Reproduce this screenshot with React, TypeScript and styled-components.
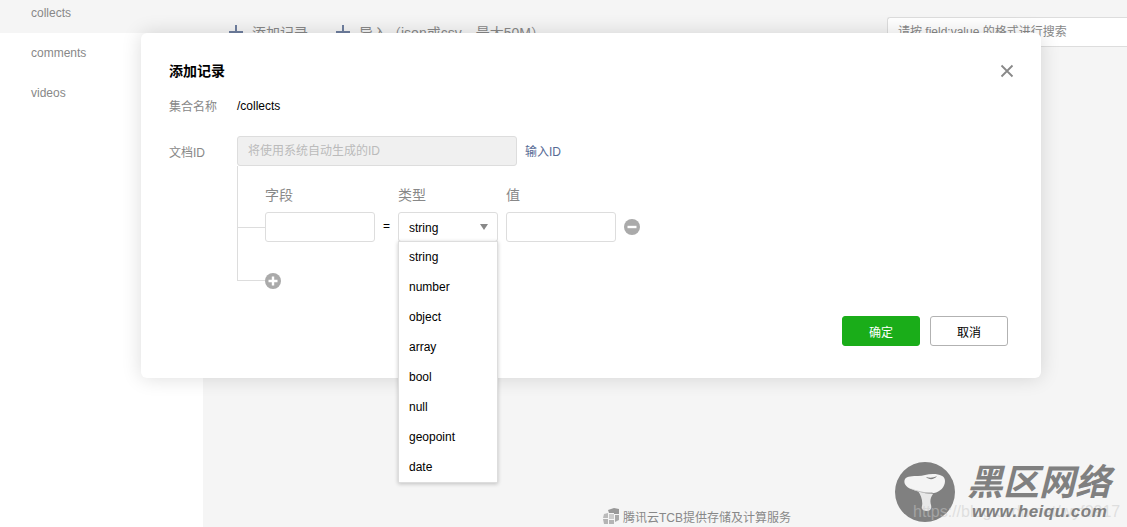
import React from 'react';
import styled, { createGlobalStyle } from 'styled-components';

const GlobalStyle = createGlobalStyle`
  html, body {
    margin: 0;
    padding: 0;
    background: #f5f5f5;
  }
  * {
    box-sizing: border-box;
  }
  body {
    font-family: "Liberation Sans", "Noto Sans CJK SC", sans-serif;
    font-size: 12px;
    color: #000;
  }
`;

const Page = styled.div`
  position: relative;
  display: flex;
  width: 1127px;
  height: 527px;
  overflow: hidden;
`;

const Sidebar = styled.ul`
  width: 203px;
  height: 100%;
  margin: 0;
  padding: 0;
  list-style: none;
  background: #fff;
`;

const SideItem = styled.li<{ $active?: boolean }>`
  height: 40px;
  margin-top: ${p => (p.$active ? '-7px' : '0')};
  padding-left: 31px;
  line-height: 40px;
  color: #888;
  background: ${p => (p.$active ? '#f5f5f5' : 'transparent')};
`;

const Main = styled.main`
  flex: 1;
  display: flex;
  flex-direction: column;
  background: #f5f5f5;
`;

const Toolbar = styled.div`
  display: flex;
  align-items: flex-start;
  height: 47px;
  padding: 17px 0 0 26px;
`;

const ToolAction = styled.div<{ $width: number }>`
  display: flex;
  align-items: center;
  gap: 9px;
  width: ${p => p.$width}px;
  height: 30px;
  font-size: 14px;
  color: #888;
`;

const SearchBox = styled.div`
  width: 240px;
  height: 30px;
  margin-left: auto;
  padding-left: 10px;
  line-height: 28px;
  color: #888;
  background: #fff;
  border: 1px solid #ddd;
  border-right: 0;
  border-radius: 3px 0 0 3px;
`;

const Footer = styled.div`
  display: flex;
  align-items: center;
  gap: 4px;
  height: 20px;
  margin-top: auto;
  margin-bottom: 1px;
  padding-left: 400px;
  color: #888;
`;

const Modal = styled.section`
  position: absolute;
  left: 141px;
  top: 33px;
  width: 900px;
  height: 345px;
  padding: 28px 33px 0 28px;
  background: #fff;
  border-radius: 6px;
  box-shadow: 0 0 20px rgba(0, 0, 0, 0.14);
`;

const ModalHead = styled.div`
  display: flex;
  align-items: center;
  justify-content: space-between;
  height: 20px;
`;

const ModalTitle = styled.h3`
  margin: 0;
  font-size: 14px;
  font-weight: 700;
  line-height: 20px;
`;

const CloseButton = styled.span`
  display: flex;
  margin-right: -6px;
`;

const FormRow = styled.div<{ $top: number; $height: number }>`
  display: flex;
  align-items: center;
  height: ${p => p.$height}px;
  margin-top: ${p => p.$top}px;
`;

const Label = styled.label`
  width: 68px;
  color: #888;
`;

const PathValue = styled.span`
  padding-top: 1px;
`;

const IdInput = styled.div`
  width: 280px;
  height: 30px;
  padding-left: 10px;
  line-height: 28px;
  color: #bbb;
  background: #f0f0f0;
  border: 1px solid #ddd;
  border-radius: 3px;
`;

const TextLink = styled.a`
  margin: -2px 0 0 8px;
  color: #576b95;
`;

const Tree = styled.div`
  width: 600px;
  height: 115px;
  margin-left: 68px;
  border-left: 1px solid #ddd;
`;

const TreeRow = styled.div<{ $height: number }>`
  display: flex;
  align-items: flex-start;
  height: ${p => p.$height}px;
`;

const Branch = styled.div<{ $top: number }>`
  flex: none;
  width: 27px;
  height: 1px;
  margin-top: ${p => p.$top}px;
  background: #ddd;
`;

const Fields = styled.div`
  display: grid;
  grid-template-columns: 110px 23px 100px 118px 32px;
  grid-template-rows: 46px 30px;
`;

const FieldHead = styled.div<{ $inset?: number }>`
  padding: 19px 0 0 ${p => p.$inset || 0}px;
  font-size: 14px;
  line-height: 20px;
  color: #888;
`;

const TextBox = styled.div<{ $inset?: number }>`
  width: 110px;
  height: 30px;
  margin-left: ${p => p.$inset || 0}px;
  background: #fff;
  border: 1px solid #ddd;
  border-radius: 3px;
`;

const Equals = styled.div`
  padding-left: 8px;
  line-height: 28px;
`;

const Select = styled.div`
  position: relative;
  display: flex;
  align-items: center;
  justify-content: space-between;
  width: 100px;
  height: 30px;
  padding: 1px 9px 0 10px;
  background: #fff;
  border: 1px solid #ddd;
  border-radius: 3px;
`;

const Caret = styled.span`
  width: 0;
  height: 0;
  margin-top: -1px;
  border-left: 4.5px solid transparent;
  border-right: 4.5px solid transparent;
  border-top: 6px solid #888;
`;

const Menu = styled.ul`
  position: absolute;
  z-index: 5;
  left: -1px;
  top: 28px;
  width: 100px;
  margin: 0;
  padding: 0;
  list-style: none;
  background: #fff;
  border: 1px solid #ddd;
  box-shadow: 0 1px 4px rgba(0, 0, 0, 0.22);
`;

const MenuItem = styled.li`
  height: 30px;
  padding-left: 10px;
  line-height: 30px;
`;

const RoundIcon = styled.span<{ $top?: number; $inset?: number }>`
  display: flex;
  align-items: center;
  margin-top: ${p => p.$top || 0}px;
  padding-left: ${p => p.$inset || 0}px;
`;

const ModalFooter = styled.div`
  display: flex;
  justify-content: flex-end;
  gap: 10px;
  margin-top: 35px;
`;

const Button = styled.button<{ $primary?: boolean }>`
  width: 78px;
  height: 30px;
  padding: 0;
  font: inherit;
  color: ${p => (p.$primary ? '#fff' : '#000')};
  background: ${p => (p.$primary ? '#1aad19' : '#fff')};
  border: 1px solid ${p => (p.$primary ? '#1aad19' : '#b2b2b2')};
  border-radius: 3px;
`;

// site watermark stamped over the bottom right corner
const Stamp = styled.div`
  position: absolute;
  left: 895px;
  top: 462px;
  width: 232px;
  height: 65px;
  color: #808080;
`;

const StampTitle = styled.div`
  position: absolute;
  left: 72px;
  top: 0;
  font-size: 36px;
  font-weight: 700;
  font-style: italic;
  line-height: 42px;
  white-space: nowrap;
`;

const StampUrl = styled.div`
  position: absolute;
  left: 77px;
  top: 40px;
  font-size: 17px;
  font-weight: 700;
  font-style: italic;
  line-height: 20px;
  letter-spacing: 0.5px;
  white-space: nowrap;
`;

const StampBlog = styled.div`
  position: absolute;
  left: 18px;
  top: 40px;
  font-size: 16px;
  line-height: 20px;
  color: rgba(200, 200, 200, 0.5);
  white-space: nowrap;
`;

const PlusLine = () => (
  <svg width="14" height="14" viewBox="0 0 14 14">
    <path d="M7 0v14M0 7h14" stroke="#6f7f9f" strokeWidth="2" fill="none" />
  </svg>
);

const CloseIcon = () => (
  <svg width="14" height="14" viewBox="0 0 14 14">
    <path d="M1.5 1.5l11 11M12.5 1.5l-11 11" stroke="#888" strokeWidth="1.8" fill="none" />
  </svg>
);

const CircleIcon = ({ plus }: { plus?: boolean }) => (
  <svg width="16" height="16" viewBox="0 0 16 16">
    <circle cx="8" cy="8" r="8" fill="#aaa" />
    <path d={plus ? 'M3.5 8h9M8 3.5v9' : 'M3.5 8h9'} stroke="#fff" strokeWidth="2.4" fill="none" />
  </svg>
);

const CubeIcon = () => (
  <svg width="16" height="16" viewBox="0 0 16 16">
    <path d="M5 2l6-2 5 1v5l-5 0V5H6z" fill="#999" />
    <path d="M1 6l4-1v5H0z" fill="#bbb" />
    <path d="M6 6h5v5H6z" fill="#ccc" />
    <path d="M12 7h4v5l-4 2z" fill="#aaa" />
    <path d="M0 11h5v5H1zM6 12h5v4H6z" fill="#b4b4b4" />
  </svg>
);

const Mushroom = () => (
  <svg width="60" height="60" viewBox="0 0 60 60">
    <circle cx="30" cy="30" r="30" fill="#808080" />
    <path d="M23 29c5 2 10 3 15 3-3 4-3 8-2 11 1 4-1 6-4 6-4 0-6-2-5-5 1-5-1-11-4-15z" fill="#e8e8e8" />
    <path
      d="M10 17c-2 4 1 8 6 10 7 3 16 5 23 4 6-1 11-6 11-12 0-5-5-7-12-7-6 0-10 2-15 2-5 0-11 0-13 3z"
      fill="#f4f4f4"
    />
    <path d="M31 15c4 1 7 1 11-1-3 4-8 4-11 1z" fill="#808080" />
    <path d="M15 26c7 3 15 5 23 4l-1 1c-8 1-15-1-22-5z" fill="#bdbdbd" />
  </svg>
);

const typeOptions = ['string', 'number', 'object', 'array', 'bool', 'null', 'geopoint', 'date'];

export default function App() {
  return (
    <>
      <GlobalStyle />
      <Page>
        <Sidebar>
          <SideItem $active>collects</SideItem>
          <SideItem>comments</SideItem>
          <SideItem>videos</SideItem>
        </Sidebar>
        <Main>
          <Toolbar>
            <ToolAction $width={107}><PlusLine />添加记录</ToolAction>
            <ToolAction $width={300}><PlusLine />导入（json或csv，最大50M）</ToolAction>
            <SearchBox>请按 field:value 的格式进行搜索</SearchBox>
          </Toolbar>
          <Footer><CubeIcon />腾讯云TCB提供存储及计算服务</Footer>
        </Main>
        <Modal>
          <ModalHead>
            <ModalTitle>添加记录</ModalTitle>
            <CloseButton><CloseIcon /></CloseButton>
          </ModalHead>
          <FormRow $top={14} $height={20}>
            <Label>集合名称</Label>
            <PathValue>/collects</PathValue>
          </FormRow>
          <FormRow $top={21} $height={30}>
            <Label>文档ID</Label>
            <IdInput>将使用系统自动生成的ID</IdInput>
            <TextLink>输入ID</TextLink>
          </FormRow>
          <Tree>
            <TreeRow $height={76}>
              <Branch $top={61} />
              <Fields>
                <FieldHead>字段</FieldHead>
                <div />
                <FieldHead>类型</FieldHead>
                <FieldHead $inset={8}>值</FieldHead>
                <div />
                <TextBox />
                <Equals>=</Equals>
                <Select>
                  string
                  <Caret />
                  <Menu>
                    {typeOptions.map(option => (
                      <MenuItem key={option}>{option}</MenuItem>
                    ))}
                  </Menu>
                </Select>
                <TextBox $inset={8} />
                <RoundIcon $inset={8}><CircleIcon /></RoundIcon>
              </Fields>
            </TreeRow>
            <TreeRow $height={39}>
              <Branch $top={38} />
              <RoundIcon $top={31}><CircleIcon plus /></RoundIcon>
            </TreeRow>
          </Tree>
          <ModalFooter>
            <Button $primary>确定</Button>
            <Button>取消</Button>
          </ModalFooter>
        </Modal>
        <Stamp>
          <Mushroom />
          <StampBlog>https://blog.csdn.net/wyf0917</StampBlog>
          <StampTitle>黑区网络</StampTitle>
          <StampUrl>www.heiqu.com</StampUrl>
        </Stamp>
      </Page>
    </>
  );
}
